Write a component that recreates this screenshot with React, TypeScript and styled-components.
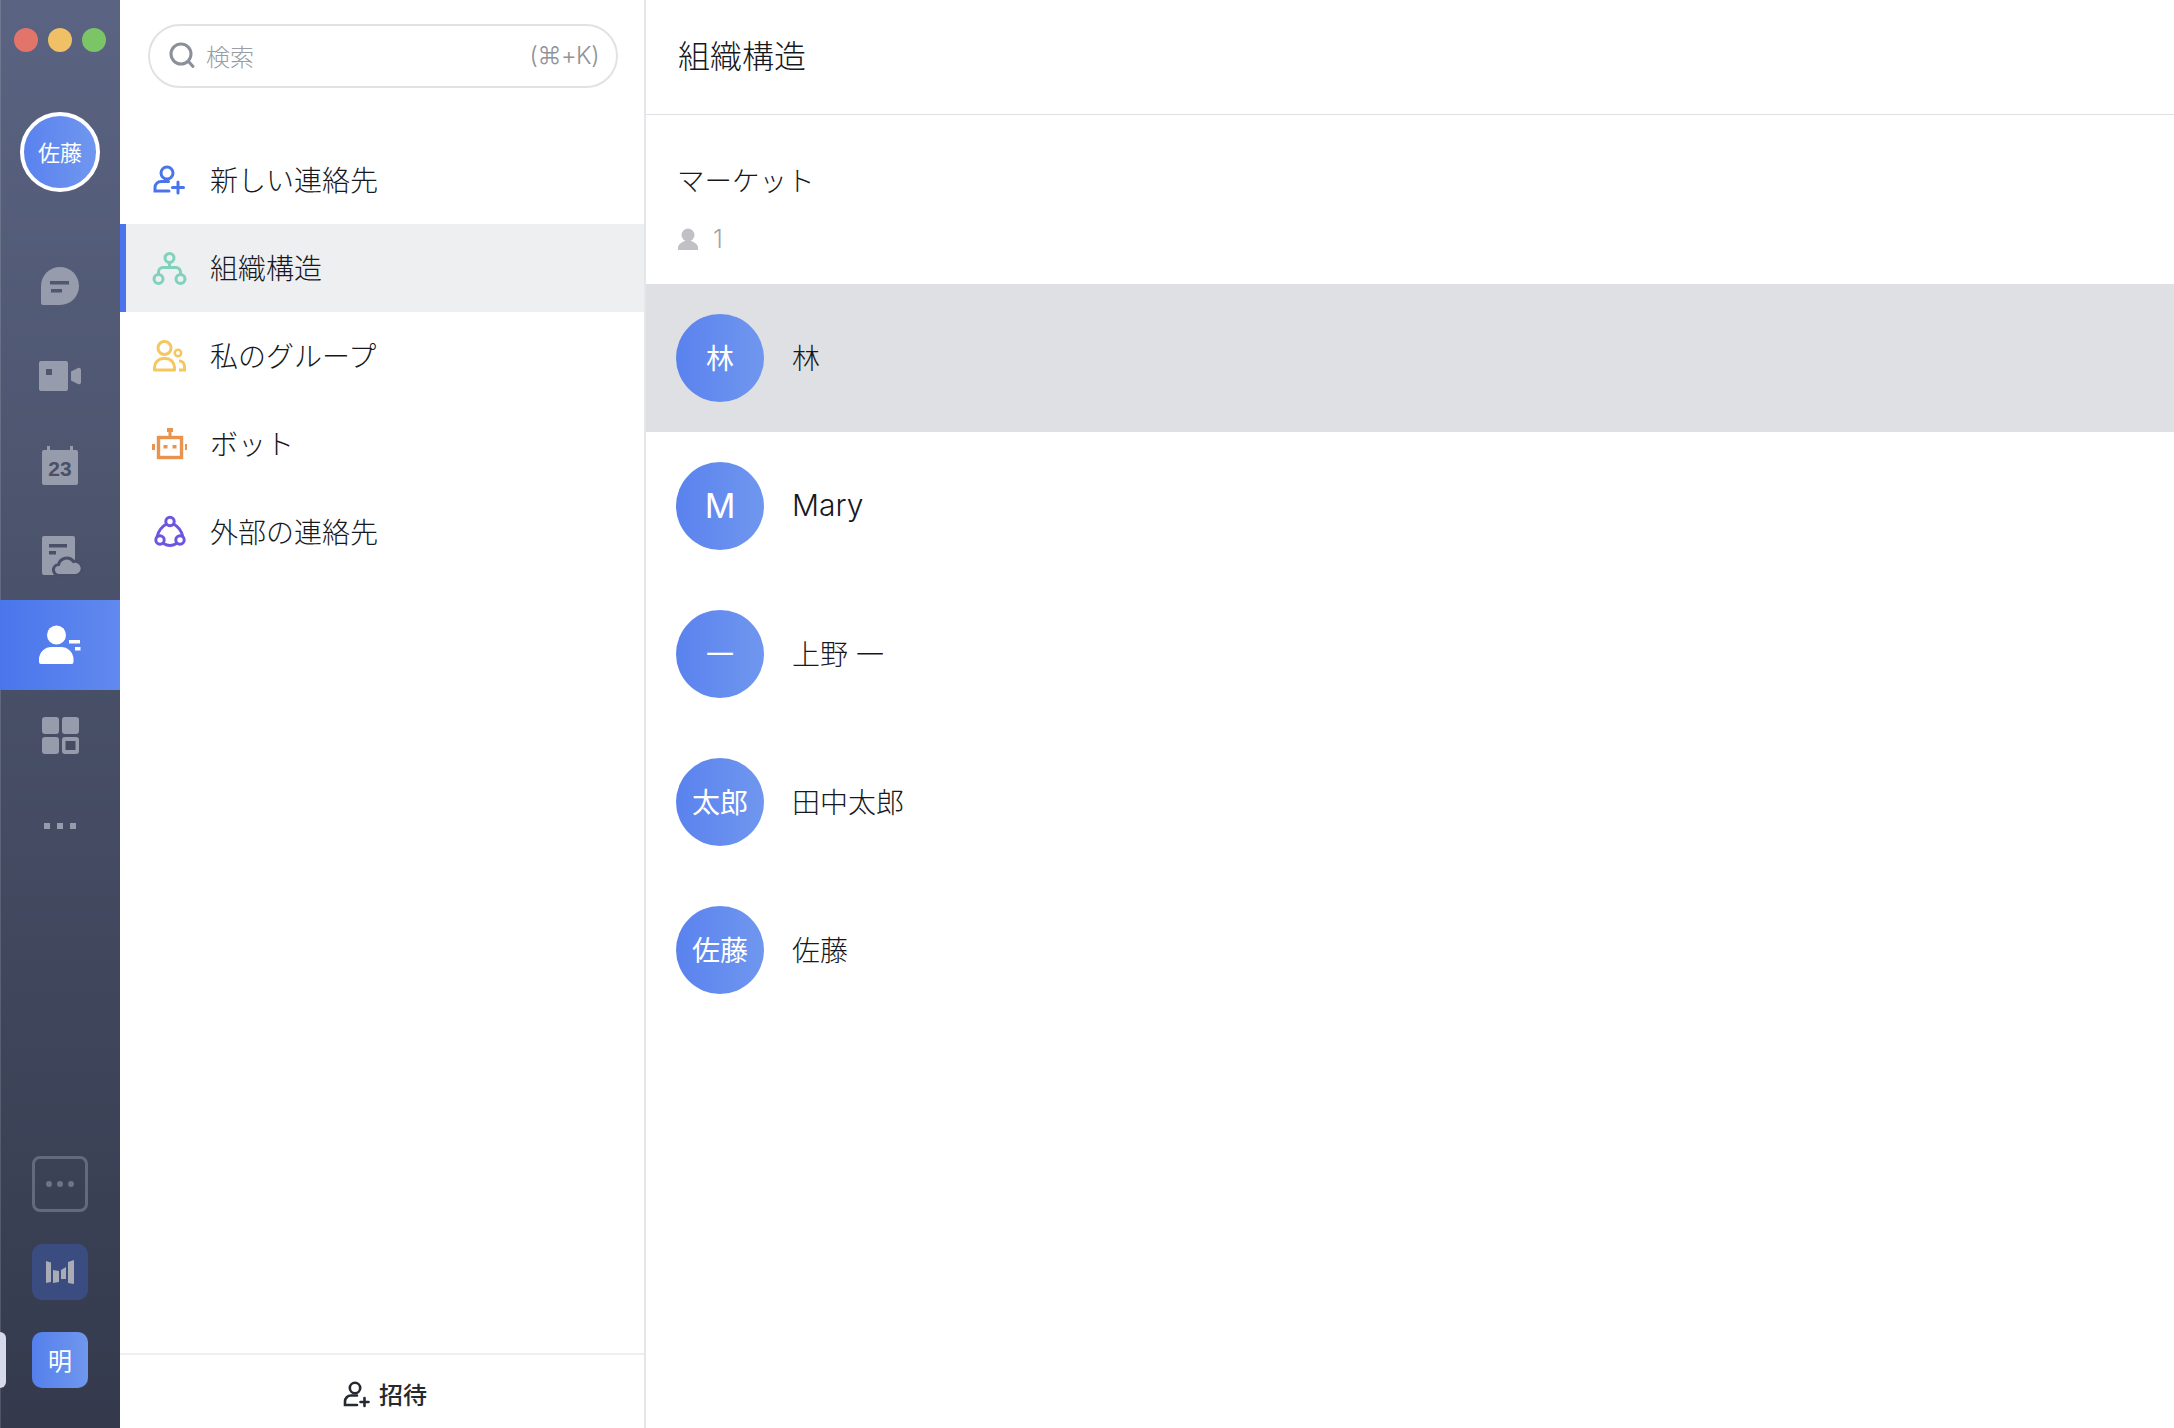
import React from "react";
import styled, { createGlobalStyle } from "styled-components";

const Global = createGlobalStyle`
  html, body { margin: 0; padding: 0; height: 100%; background: #fff; }
  body { font-family: Inter, "Noto Sans CJK JP", sans-serif; color: #16181d; overflow: hidden; }
  #root { height: 100%; }
  * { box-sizing: border-box; }
`;

const Shell = styled.div`
  display: flex;
  height: 1428px;
  width: 2174px;
`;

const Rail = styled.aside`
  width: 120px;
  flex: none;
  display: flex;
  flex-direction: column;
  background: linear-gradient(180deg, #5a6381 0%, #343a4c 100%);
  box-shadow: inset 1px 0 0 rgba(255, 255, 255, 0.14);
  padding-bottom: 40px;
`;

const Traffic = styled.div`
  display: flex;
  gap: 10px;
  padding: 28px 0 0 14px;
`;

const Light = styled.span<{ $c: string }>`
  width: 24px;
  height: 24px;
  border-radius: 50%;
  background: ${(p) => p.$c};
`;

const Me = styled.div`
  width: 80px;
  height: 80px;
  margin: 60px 0 48px 20px;
  padding-bottom: 2px;
  border-radius: 50%;
  border: 4px solid #fff;
  background: linear-gradient(90deg, #5a82ee, #7097ee);
  color: #fff;
  font-size: 22px;
  display: flex;
  align-items: center;
  justify-content: center;
`;

const RailNav = styled.nav`
  display: flex;
  flex-direction: column;
  flex: 1;
`;

const RailItem = styled.div<{ $active?: boolean }>`
  height: 90px;
  display: flex;
  align-items: center;
  justify-content: center;
  background: ${(p) => (p.$active ? "linear-gradient(90deg, #4a76ec, #6189ee)" : "transparent")};
`;

const RailTile = styled.div<{ $kind: "outline" | "chart" | "app" }>`
  position: relative;
  width: 56px;
  height: 56px;
  margin: 0 0 32px 32px;
  padding-bottom: ${(p) => (p.$kind === "app" ? "2px" : "0")};
  border-radius: ${(p) => (p.$kind === "outline" ? "8px" : "10px")};
  display: flex;
  align-items: center;
  justify-content: center;
  color: #fff;
  font-size: 24px;
  border: ${(p) => (p.$kind === "outline" ? "3.5px solid #646a7d" : "none")};
  background: ${(p) =>
    p.$kind === "chart"
      ? "#3a4c80"
      : p.$kind === "app"
      ? "linear-gradient(90deg, #5480ec, #7097ee)"
      : "transparent"};
  &:last-child { margin-bottom: 0; }
`;

const Indicator = styled.span`
  position: absolute;
  left: -32px;
  top: 0;
  width: 6px;
  height: 56px;
  background: #d6d9ea;
  border-radius: 0 6px 6px 0;
`;

const Panel = styled.section`
  width: 526px;
  flex: none;
  display: flex;
  flex-direction: column;
  border-right: 2px solid #e5e6e9;
`;

const SearchBox = styled.div`
  height: 64px;
  margin: 24px 26px 48px 28px;
  border: 2px solid #e1e2e6;
  border-radius: 32px;
  display: flex;
  align-items: center;
  padding: 0 17px 2px 18px;
`;

const SearchHint = styled.span`
  margin-left: 10px;
  flex: 1;
  font-size: 24px;
  font-weight: 300;
  color: #9a9da5;
`;

const SearchKeys = styled.span`
  font-size: 24px;
  font-weight: 300;
  letter-spacing: -0.5px;
  color: #8f9299;
`;

const ContactNav = styled.nav`
  flex: 1;
  display: flex;
  flex-direction: column;
`;

const NavRow = styled.div<{ $active?: boolean }>`
  height: 88px;
  display: flex;
  align-items: center;
  gap: 23px;
  padding-left: 25px;
  border-left: 6px solid ${(p) => (p.$active ? "#4a74ec" : "transparent")};
  background: ${(p) => (p.$active ? "#eeeff1" : "transparent")};
  font-size: 28px;
  font-weight: 300;
`;

const NavLabel = styled.span`
  margin-top: -3px;
`;

const Footer = styled.div`
  height: 75px;
  flex: none;
  border-top: 2px solid #efeff1;
  padding: 4px 0 0 5px;
  display: flex;
  align-items: center;
  justify-content: center;
  gap: 9px;
  font-size: 24px;
  font-weight: 500;
  color: #26292f;
`;

const Main = styled.main`
  flex: 1;
  min-width: 0;
  display: flex;
  flex-direction: column;
`;

const Header = styled.header`
  height: 115px;
  flex: none;
  border-bottom: 1px solid #dfe0e3;
  display: flex;
  align-items: center;
  padding: 0 0 7px 32px;
  font-size: 32px;
  font-weight: 300;
`;

const Group = styled.div`
  height: 169px;
  padding: 46px 0 0 31px;
`;

const GroupName = styled.div`
  font-size: 27.5px;
  font-weight: 300;
  line-height: 40px;
`;

const GroupCount = styled.div`
  margin-top: 23px;
  padding-left: 1px;
  display: flex;
  align-items: center;
  gap: 15px;
  font-size: 25px;
  font-weight: 300;
  line-height: 30px;
  color: #a2a5ab;
`;

const Member = styled.div<{ $active?: boolean }>`
  height: 148px;
  display: flex;
  align-items: center;
  gap: 28px;
  padding-left: 30px;
  background: ${(p) => (p.$active ? "#dee0e3" : "transparent")};
`;

const MemberName = styled.span<{ $latin?: boolean }>`
  font-size: ${(p) => (p.$latin ? "30px" : "28px")};
  font-weight: 300;
  margin-top: -2px;
`;

const Avatar = styled.div<{ $big?: boolean }>`
  width: 88px;
  height: 88px;
  padding-bottom: 2px;
  border-radius: 50%;
  background: linear-gradient(90deg, #5a82ee, #7097ee);
  color: #fff;
  font-size: ${(p) => (p.$big ? "34px" : "28px")};
  font-weight: 400;
  display: flex;
  align-items: center;
  justify-content: center;
`;

const G = "#979cac";
const D = "#50576f";

const ChatIcon = () => (
  <svg width="48" height="48" viewBox="0 0 48 48">
    <path fill={G} d="M24 6a19 19 0 1 1 0 38H7a2 2 0 0 1-2-2V25A19 19 0 0 1 24 6z" />
    <rect fill={D} x="14" y="20" width="19" height="3.5" />
    <rect fill={D} x="15" y="28" width="11" height="3.5" />
  </svg>
);
const VideoIcon = () => (
  <svg width="48" height="48" viewBox="0 0 48 48">
    <rect fill={G} x="3" y="10" width="29" height="30" rx="2" />
    <rect fill="#4f566f" x="10" y="18" width="6" height="6" />
    <path fill={G} d="M35 20.5l7-3.5a2 2 0 0 1 3 1.5v13a2 2 0 0 1-3 1.5l-7-3.5z" />
  </svg>
);
const CalIcon = () => (
  <svg width="48" height="48" viewBox="0 0 48 48">
    <rect fill={G} x="6" y="9" width="36" height="35" rx="2" />
    <rect fill={G} x="11" y="5" width="3" height="5" />
    <rect fill={G} x="34" y="5" width="3" height="5" />
    <text x="24" y="35" textAnchor="middle" fontFamily="Liberation Sans" fontWeight="700" fontSize="21" fill="#4a5068">23</text>
  </svg>
);
const DocIcon = () => (
  <svg width="48" height="48" viewBox="0 0 48 48">
    <rect fill={G} x="6" y="5" width="33" height="39" rx="2" />
    <rect fill="#4a5068" x="13" y="13" width="18" height="3.5" />
    <rect fill="#4a5068" x="13" y="20" width="7" height="3.5" />
    <path fill={G} stroke="#4a5068" strokeWidth="3" d="M23.5 44.5a5.5 5.5 0 0 1-1-11a8.5 8.5 0 0 1 15-3a7 7 0 0 1 3 14z" />
  </svg>
);
const PeopleIcon = () => (
  <svg width="48" height="48" viewBox="0 0 48 48" fill="#fff">
    <circle cx="20.5" cy="14" r="9.5" />
    <path d="M3 41v-3a12.5 12.5 0 0 1 12.5-12h9.5a12.5 12.5 0 0 1 12.5 12v3a2 2 0 0 1-2 2H5a2 2 0 0 1-2-2z" />
    <rect x="33" y="19" width="11" height="3.5" />
    <rect x="39" y="26" width="5.5" height="3.5" />
  </svg>
);
const GridIcon = () => (
  <svg width="48" height="48" viewBox="0 0 48 48" fill={G}>
    <rect x="6" y="6" width="17" height="17" rx="3" />
    <rect x="26" y="6" width="17" height="17" rx="3" />
    <rect x="6" y="26" width="17" height="17" rx="3" />
    <rect x="26" y="26" width="17" height="17" rx="3" />
    <rect x="29.5" y="30" width="10" height="9" fill="#454b60" />
  </svg>
);
const MoreIcon = () => (
  <svg width="48" height="48" viewBox="0 0 48 48" fill={G}>
    <rect x="8" y="22" width="6" height="6" />
    <rect x="21" y="22" width="6" height="6" />
    <rect x="34" y="22" width="6" height="6" />
  </svg>
);
const DotsIcon = () => (
  <svg width="36" height="10" viewBox="0 0 36 10" fill="#6e7386">
    <circle cx="7" cy="5" r="3" />
    <circle cx="18" cy="5" r="3" />
    <circle cx="29" cy="5" r="3" />
  </svg>
);
const BarsIcon = () => (
  <svg width="56" height="56" viewBox="0 0 56 56" fill="#a9acb4">
    <polygon points="14,17 19,18.5 19,38 14,39" />
    <polygon points="21,26 27,27 27,38 21,39" />
    <polygon points="29,26 34,23 34,35 29,35" />
    <polygon points="36,18 42,16 42,40 36,39" />
  </svg>
);
const SearchIcon = () => (
  <svg width="28" height="28" viewBox="0 0 28 28" fill="none" stroke="#8a8f99" strokeWidth="3" strokeLinecap="round">
    <circle cx="13" cy="13" r="10" />
    <path d="M21 21l4 4.5" />
  </svg>
);
const AddIcon = () => (
  <svg width="36" height="36" viewBox="0 0 36 36" fill="none" stroke="#4a74ec" strokeWidth="3" strokeLinecap="round">
    <circle cx="16" cy="11" r="6" />
    <path d="M17.5 19.5H10a6 6 0 0 0-6 6V29h14" />
    <path d="M21.5 25.5h11M27 20v11" />
  </svg>
);
const OrgIcon = () => (
  <svg width="36" height="36" viewBox="0 0 36 36" fill="none" stroke="#80d2ba" strokeWidth="3">
    <circle cx="18.5" cy="8" r="4.5" />
    <circle cx="7.5" cy="29" r="4.5" />
    <circle cx="29.5" cy="29" r="4.5" />
    <path d="M18.5 12.5v5M7.5 24.5V22a4.5 4.5 0 0 1 4.5-4.5h13a4.5 4.5 0 0 1 4.5 4.5v2.5" />
  </svg>
);
const TeamIcon = () => (
  <svg width="36" height="36" viewBox="0 0 36 36" fill="none" stroke="#f4c75f" strokeWidth="3">
    <circle cx="13.5" cy="10" r="6.5" />
    <circle cx="27" cy="15" r="3.2" strokeWidth="2.5" />
    <path d="M3.5 32v-2.5a9 9 0 0 1 9-9h2a9 9 0 0 1 9 9V32z" strokeLinejoin="round" />
    <path d="M28 23a5 5 0 0 1 5.5 5v4H28" />
  </svg>
);
const BotIcon = () => (
  <svg width="36" height="36" viewBox="0 0 36 36" fill="#e8944e">
    <rect x="7.5" y="11.5" width="23" height="20" fill="none" stroke="#e8944e" strokeWidth="3.4" />
    <rect x="16" y="2" width="6" height="4" />
    <rect x="17.5" y="6" width="3" height="5" />
    <rect x="1" y="18" width="3" height="6" />
    <rect x="34" y="18" width="3" height="6" />
    <rect x="12.5" y="19" width="4" height="3.5" />
    <rect x="21.5" y="19" width="4" height="3.5" />
  </svg>
);
const ExternalIcon = () => (
  <svg width="36" height="36" viewBox="0 0 36 36" fill="none" stroke="#6c55e0" strokeWidth="3">
    <circle cx="19" cy="7.5" r="4.2" />
    <circle cx="9" cy="26" r="4.2" />
    <circle cx="29" cy="26" r="4.2" />
    <path d="M15.5 10Q8 14 6 23M22.5 10Q30 14 32 23M12.5 29.5Q19 33.5 25.5 29.5" />
  </svg>
);
const InviteIcon = () => (
  <svg width="28" height="28" viewBox="0 0 28 28" fill="none" stroke="#26292f" strokeWidth="2.6" strokeLinecap="round">
    <circle cx="13" cy="8" r="5.2" />
    <path d="M15 15.5H9a6 6 0 0 0-6 6V25h12" />
    <path d="M18.5 22h8M22.5 18v8" />
  </svg>
);
const PersonIcon = () => (
  <svg width="20" height="22" viewBox="0 0 20 22" fill="#bfc1c5">
    <circle cx="10" cy="7" r="6.5" />
    <path d="M0 22v-2.5c0-3 3-5 7-6.5h6c4 1.5 7 3.5 7 6.5V22z" />
  </svg>
);

const railItems = [ChatIcon, VideoIcon, CalIcon, DocIcon, PeopleIcon, GridIcon, MoreIcon];
const navItems = [
  { Icon: AddIcon, label: "新しい連絡先" },
  { Icon: OrgIcon, label: "組織構造", active: true },
  { Icon: TeamIcon, label: "私のグループ" },
  { Icon: BotIcon, label: "ボット" },
  { Icon: ExternalIcon, label: "外部の連絡先" },
];
const members = [
  { a: "林", n: "林", active: true },
  { a: "M", n: "Mary", big: true },
  { a: "一", n: "上野 一" },
  { a: "太郎", n: "田中太郎" },
  { a: "佐藤", n: "佐藤" },
];

export default function App() {
  return (
    <Shell>
      <Global />
      <Rail>
        <Traffic>
          <Light $c="#e1756a" />
          <Light $c="#efc066" />
          <Light $c="#7bc567" />
        </Traffic>
        <Me>佐藤</Me>
        <RailNav>
          {railItems.map((Icon, i) => (
            <RailItem key={i} $active={i === 4}>
              <Icon />
            </RailItem>
          ))}
        </RailNav>
        <RailTile $kind="outline"><DotsIcon /></RailTile>
        <RailTile $kind="chart"><BarsIcon /></RailTile>
        <RailTile $kind="app"><Indicator />明</RailTile>
      </Rail>
      <Panel>
        <SearchBox>
          <SearchIcon />
          <SearchHint>検索</SearchHint>
          <SearchKeys>(⌘+K)</SearchKeys>
        </SearchBox>
        <ContactNav>
          {navItems.map(({ Icon, label, active }) => (
            <NavRow key={label} $active={active}>
              <Icon />
              <NavLabel>{label}</NavLabel>
            </NavRow>
          ))}
        </ContactNav>
        <Footer>
          <InviteIcon />
          招待
        </Footer>
      </Panel>
      <Main>
        <Header>組織構造</Header>
        <Group>
          <GroupName>マーケット</GroupName>
          <GroupCount>
            <PersonIcon />1
          </GroupCount>
        </Group>
        {members.map((m) => (
          <Member key={m.n} $active={m.active}>
            <Avatar $big={m.big}>{m.a}</Avatar>
            <MemberName $latin={m.big}>{m.n}</MemberName>
          </Member>
        ))}
      </Main>
    </Shell>
  );
}
